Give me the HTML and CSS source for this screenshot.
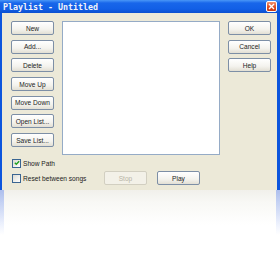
FILE: index.html
```html
<!DOCTYPE html>
<html lang="en">
<head>
    <meta charset="UTF-8">
    <title>Playlist - Untitled</title>
    <link rel="stylesheet" href="styles.css">
</head>
<body>
    <div class="window">
        <div class="titlebar">
            <span class="title">Playlist - Untitled</span>
            <span class="close">
                <svg width="7" height="7" viewBox="0 0 7 7"><path d="M1 1L6 6M6 1L1 6" stroke="#fff" stroke-width="1.4"/></svg>
            </span>
        </div>
        <div class="frame">
            <div class="main">
                <div class="col">
                    <button class="btn">New</button>
                    <button class="btn">Add...</button>
                    <button class="btn">Delete</button>
                    <button class="btn">Move Up</button>
                    <button class="btn">Move Down</button>
                    <button class="btn">Open List...</button>
                    <button class="btn">Save List...</button>
                </div>
                <div class="list"></div>
                <div class="col">
                    <button class="btn">OK</button>
                    <button class="btn">Cancel</button>
                    <button class="btn">Help</button>
                </div>
            </div>
            <label class="check">
                <span class="box"><svg width="6" height="6" viewBox="0 0 6 6"><path d="M0.8 2.8L2.3 4.3L5.2 1.3" fill="none" stroke="#21a121" stroke-width="1.4"/></svg></span>
                Show Path
            </label>
            <div class="bottom">
                <label class="check reset"><span class="box"></span>Reset between songs</label>
                <button class="btn" disabled>Stop</button>
                <button class="btn">Play</button>
            </div>
        </div>
    </div>
    <div class="reflection"></div>
</body>
</html>
```

FILE: styles.css
```css
body {
    margin: 0;
    background: #fff;
    font-family: "Liberation Sans", Arial, sans-serif;
    font-size: 6.6px;
    color: #222;
}
.window {
    width: 280px;
    height: 190px;
    display: flex;
    flex-direction: column;
}
.titlebar {
    height: 13px;
    display: flex;
    align-items: center;
    justify-content: space-between;
    background: linear-gradient(#4a97f7 0, #1866ea 3px, #125fe6 9px, #0c50d0 13px);
}
.title {
    padding-left: 3px;
    font-family: "DejaVu Sans Mono", monospace;
    font-weight: bold;
    font-size: 8.3px;
    color: #f2f4fa;
}
.close {
    width: 11px;
    height: 11px;
    box-sizing: border-box;
    margin-right: 3px;
    border: 1px solid #fff;
    border-radius: 2px;
    background: linear-gradient(#f09270, #dd4a1f 60%, #c93a12);
    display: flex;
    align-items: center;
    justify-content: center;
}
.frame {
    flex: 1;
    background: #ece9d8;
    border-left: 2px solid #0c55dd;
    border-right: 3px solid #0c55dd;
    padding: 8px 6px 0 9px;
}
.main {
    display: flex;
    gap: 8px;
    height: 134px;
}
.col {
    display: flex;
    flex-direction: column;
    gap: 4.7px;
}
.btn {
    width: 43px;
    height: 14px;
    box-sizing: border-box;
    padding: 0;
    border: 1px solid #7d8fa6;
    border-radius: 2px;
    background: linear-gradient(#ffffff, #f4f3ee 60%, #e2dfd4);
    font-family: "Liberation Sans", Arial, sans-serif;
    font-size: 6.6px;
    color: #222;
}
.btn:disabled {
    border-color: #d2cfc1;
    background: #f3f1e8;
    color: #b8b4a5;
}
.list {
    width: 158px;
    box-sizing: border-box;
    background: #fff;
    border: 1px solid #95abc6;
}
.check {
    display: flex;
    align-items: center;
    height: 10px;
    margin-top: 3px;
    margin-left: 1px;
}
.box {
    width: 7px;
    height: 7px;
    border: 1px solid #3a6592;
    background: linear-gradient(135deg, #dcdbd3, #fff);
    margin-right: 2px;
    display: flex;
    align-items: center;
    justify-content: center;
}
.bottom {
    display: flex;
    align-items: center;
    height: 14px;
    margin-top: 3px;
    gap: 10px;
}
.reset {
    margin-top: 0;
    width: 82px;
}
.reflection {
    position: relative;
    height: 80px;
    background: linear-gradient(#f1f0eb 0, #f8f8f5 12px, #fff 35px);
}
.reflection::before,
.reflection::after {
    content: "";
    position: absolute;
    top: 0;
    width: 4px;
    height: 45px;
    background: linear-gradient(rgba(90, 130, 240, 0.45), rgba(90, 130, 240, 0));
}
.reflection::before {
    left: 0;
}
.reflection::after {
    right: 0;
}
```
